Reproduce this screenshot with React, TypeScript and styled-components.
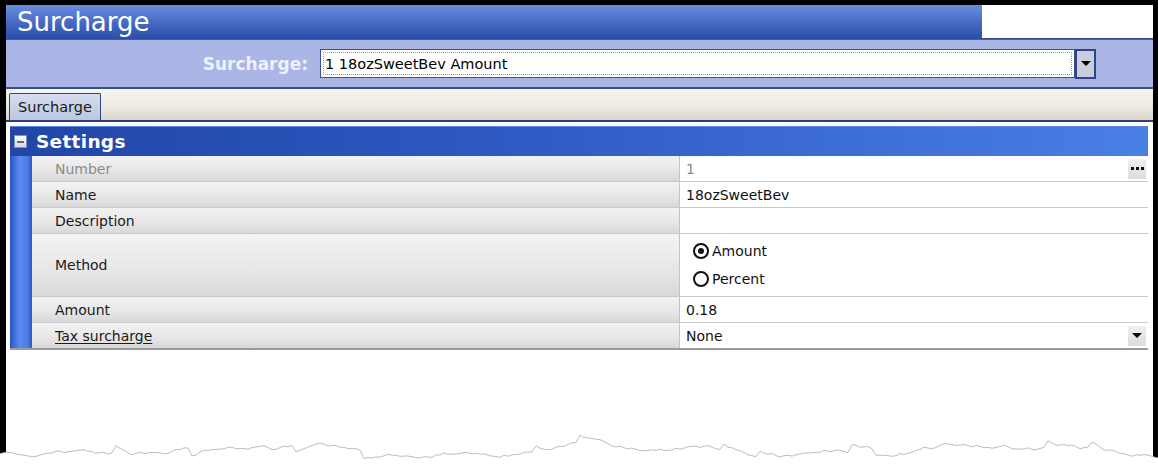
import React from "react";
import styled, { createGlobalStyle } from "styled-components";

const GlobalStyle = createGlobalStyle`
  html, body {
    margin: 0;
    padding: 0;
    background: #ffffff;
  }
  body {
    font-family: "DejaVu Sans", Verdana, sans-serif;
  }
`;

const Page = styled.div`
  position: relative;
  width: 1158px;
  height: 476px;
  overflow: hidden;
  background: #ffffff;
`;

const Frame = styled.div`
  box-sizing: border-box;
  width: 1158px;
  height: 468px;
  border-top: 5px solid #000;
  border-left: 6px solid #000;
  border-right: 5px solid #000;
  display: flex;
  flex-direction: column;
  background: #ffffff;
`;

const TitleBar = styled.div`
  display: flex;
  height: 34px;
`;

const TitleText = styled.div`
  flex: 1;
  display: flex;
  align-items: center;
  padding-left: 11px;
  color: #ffffff;
  font-family: "DejaVu Sans", Verdana, sans-serif;
  font-size: 26px;
  background: linear-gradient(#6a8ede, #4468c2 55%, #2a4ea4);
`;

const TitleBlank = styled.div`
  width: 171px;
  background: #ffffff;
  border-bottom: 1px solid #3b4f8f;
`;

const HeaderBand = styled.div`
  box-sizing: border-box;
  height: 50px;
  display: flex;
  align-items: center;
  background: #abb5e6;
  border-top: 1px solid #4a5c9a;
  border-bottom: 2px solid #3a4c86;
`;

const BandLabel = styled.div`
  width: 302px;
  text-align: right;
  color: #eef1fb;
  font-weight: bold;
  font-size: 17px;
  margin-right: 12px;
`;

const SelectBox = styled.div`
  box-sizing: border-box;
  width: 755px;
  height: 29px;
  padding: 2px;
  background: #ffffff;
  border: 1px solid #3a4f8c;
`;

const SelectInner = styled.div`
  box-sizing: border-box;
  height: 100%;
  display: flex;
  align-items: center;
  padding-left: 1px;
  border: 1px dotted #9a9a9a;
  font-size: 14.5px;
  color: #000;
`;

const SelectButton = styled.div`
  box-sizing: border-box;
  width: 21px;
  height: 30px;
  display: flex;
  align-items: center;
  justify-content: center;
  background: #c9cedf;
  border: 2px solid #2f4486;
`;

const ArrowDown = styled.div<{ $size?: number }>`
  width: 0;
  height: 0;
  border-left: ${(p) => p.$size ?? 5}px solid transparent;
  border-right: ${(p) => p.$size ?? 5}px solid transparent;
  border-top: ${(p) => p.$size ?? 5}px solid #000;
`;

const TabStrip = styled.div`
  box-sizing: border-box;
  height: 33px;
  display: flex;
  align-items: flex-end;
  padding-left: 3px;
  background: linear-gradient(#f6f5f0, #ece9e0 60%, #d9d5c8);
  border-bottom: 2px solid #2f4070;
`;

const Tab = styled.div`
  box-sizing: border-box;
  width: 92px;
  height: 27px;
  display: flex;
  align-items: center;
  justify-content: center;
  font-size: 14.5px;
  color: #1a1a1a;
  background: linear-gradient(#d7ddef, #bcc6e2);
  border: 1px solid #2e4480;
  border-bottom: none;
  border-radius: 2px 2px 0 0;
`;

const Section = styled.div`
  margin: 4px 5px 0 4px;
  display: flex;
  flex-direction: column;
  border-bottom: 2px solid #9a9a9a;
`;

const SectionHeader = styled.div`
  height: 29px;
  display: flex;
  align-items: center;
  gap: 9px;
  padding-left: 4px;
  background: linear-gradient(90deg, #2146a6, #2c58c0 40%, #4a7fe6);
  border-top: 1px solid #5d86e0;
`;

const Collapse = styled.div`
  box-sizing: border-box;
  width: 13px;
  height: 13px;
  display: flex;
  align-items: center;
  justify-content: center;
  background: linear-gradient(#ffffff, #d4d8e4);
  border: 1px solid #8090b8;
  &::after {
    content: "";
    width: 7px;
    height: 2px;
    background: #6a6a6a;
  }
`;

const SectionTitle = styled.div`
  color: #ffffff;
  font-weight: bold;
  font-size: 18.5px;
  letter-spacing: 0.3px;
`;

const SectionBody = styled.div`
  display: flex;
`;

const Stripe = styled.div`
  width: 22px;
  background: linear-gradient(90deg, #2a55c4, #5a8cf2 45%, #4c7ae6 80%, #2d58c4);
`;

const Rows = styled.div`
  flex: 1;
  display: flex;
  flex-direction: column;
`;

const Row = styled.div<{ $h?: number }>`
  box-sizing: border-box;
  display: grid;
  grid-template-columns: 648px 1fr;
  height: ${(p) => p.$h ?? 26}px;
  border-bottom: 1px solid #c9c9c9;
  &:last-child {
    border-bottom: none;
    height: ${(p) => (p.$h ?? 26) - 1}px;
  }
`;

const Label = styled.div<{ $muted?: boolean; $link?: boolean }>`
  display: flex;
  align-items: center;
  padding-left: 23px;
  font-size: 14px;
  color: ${(p) => (p.$muted ? "#8c8c8c" : "#1a1a1a")};
  text-decoration: ${(p) => (p.$link ? "underline" : "none")};
  text-underline-offset: 2px;
  background: linear-gradient(#f3f3f3, #e6e6e6 60%, #d8d8d8);
  border-right: 1px solid #c4c4c4;
`;

const Value = styled.div<{ $muted?: boolean }>`
  display: flex;
  align-items: center;
  justify-content: space-between;
  padding: 0 2px 0 6px;
  font-size: 14px;
  color: ${(p) => (p.$muted ? "#8c8c8c" : "#111")};
  background: #ffffff;
`;

const MiniButton = styled.div`
  width: 18px;
  height: 20px;
  display: flex;
  align-items: center;
  justify-content: center;
  gap: 2px;
  background: linear-gradient(#f0f0f0, #dcdcdc);
`;

const Dot = styled.span`
  width: 3px;
  height: 3px;
  background: #111;
`;

const RadioGroup = styled.div`
  display: flex;
  flex-direction: column;
  gap: 12px;
  padding-left: 7px;
`;

const RadioOption = styled.div`
  display: flex;
  align-items: center;
  gap: 3px;
  font-size: 14px;
  color: #111;
`;

const RadioCircle = styled.span<{ $checked?: boolean }>`
  box-sizing: border-box;
  width: 16px;
  height: 16px;
  border-radius: 50%;
  border: 2px solid #111;
  display: flex;
  align-items: center;
  justify-content: center;
  &::after {
    content: "";
    width: 6px;
    height: 6px;
    border-radius: 50%;
    background: ${(p) => (p.$checked ? "#111" : "transparent")};
  }
`;

const TornEdge = styled.svg`
  position: absolute;
  left: 0;
  top: 428px;
`;

// jagged paper tear along the bottom, deterministic
function tornPath(): string {
  let seed = 7;
  const rnd = () => {
    seed = (seed * 16807) % 2147483647;
    return seed / 2147483647;
  };
  const pts: string[] = [];
  let y = 28;
  for (let x = 0; x <= 1160; x += 4) {
    const target = 22 + Math.sin(x * 0.018) * 4 + Math.sin(x * 0.05 + 1.1) * 3;
    y += (target - y) * 0.22 + (rnd() - 0.5) * 3.4;
    if (rnd() > 0.965) y -= 6;
    if (rnd() > 0.985) y += 7;
    pts.push(`${x},${y.toFixed(1)}`);
  }
  return pts.join(" ");
}

export default function App() {
  const line = tornPath();
  return (
    <Page>
      <GlobalStyle />
      <Frame>
        <TitleBar>
          <TitleText>Surcharge</TitleText>
          <TitleBlank />
        </TitleBar>
        <HeaderBand>
          <BandLabel>Surcharge:</BandLabel>
          <SelectBox>
            <SelectInner>1 18ozSweetBev Amount</SelectInner>
          </SelectBox>
          <SelectButton>
            <ArrowDown $size={5} />
          </SelectButton>
        </HeaderBand>
        <TabStrip>
          <Tab>Surcharge</Tab>
        </TabStrip>
        <Section>
          <SectionHeader>
            <Collapse />
            <SectionTitle>Settings</SectionTitle>
          </SectionHeader>
          <SectionBody>
            <Stripe />
            <Rows>
              <Row>
                <Label $muted>Number</Label>
                <Value $muted>
                  1
                  <MiniButton>
                    <Dot />
                    <Dot />
                    <Dot />
                  </MiniButton>
                </Value>
              </Row>
              <Row>
                <Label>Name</Label>
                <Value>18ozSweetBev</Value>
              </Row>
              <Row>
                <Label>Description</Label>
                <Value />
              </Row>
              <Row $h={63}>
                <Label>Method</Label>
                <Value>
                  <RadioGroup>
                    <RadioOption>
                      <RadioCircle $checked />
                      Amount
                    </RadioOption>
                    <RadioOption>
                      <RadioCircle />
                      Percent
                    </RadioOption>
                  </RadioGroup>
                </Value>
              </Row>
              <Row>
                <Label>Amount</Label>
                <Value>0.18</Value>
              </Row>
              <Row>
                <Label $link>Tax surcharge</Label>
                <Value>
                  None
                  <MiniButton>
                    <ArrowDown $size={5} />
                  </MiniButton>
                </Value>
              </Row>
            </Rows>
          </SectionBody>
        </Section>
      </Frame>
      <TornEdge width={1158} height={48} viewBox="0 0 1158 48">
        <polygon points={`0,48 ${line} 1160,48`} fill="#ffffff" />
        <polyline points={line} fill="none" stroke="#a0a0a0" strokeWidth={0.7} />
      </TornEdge>
    </Page>
  );
}
